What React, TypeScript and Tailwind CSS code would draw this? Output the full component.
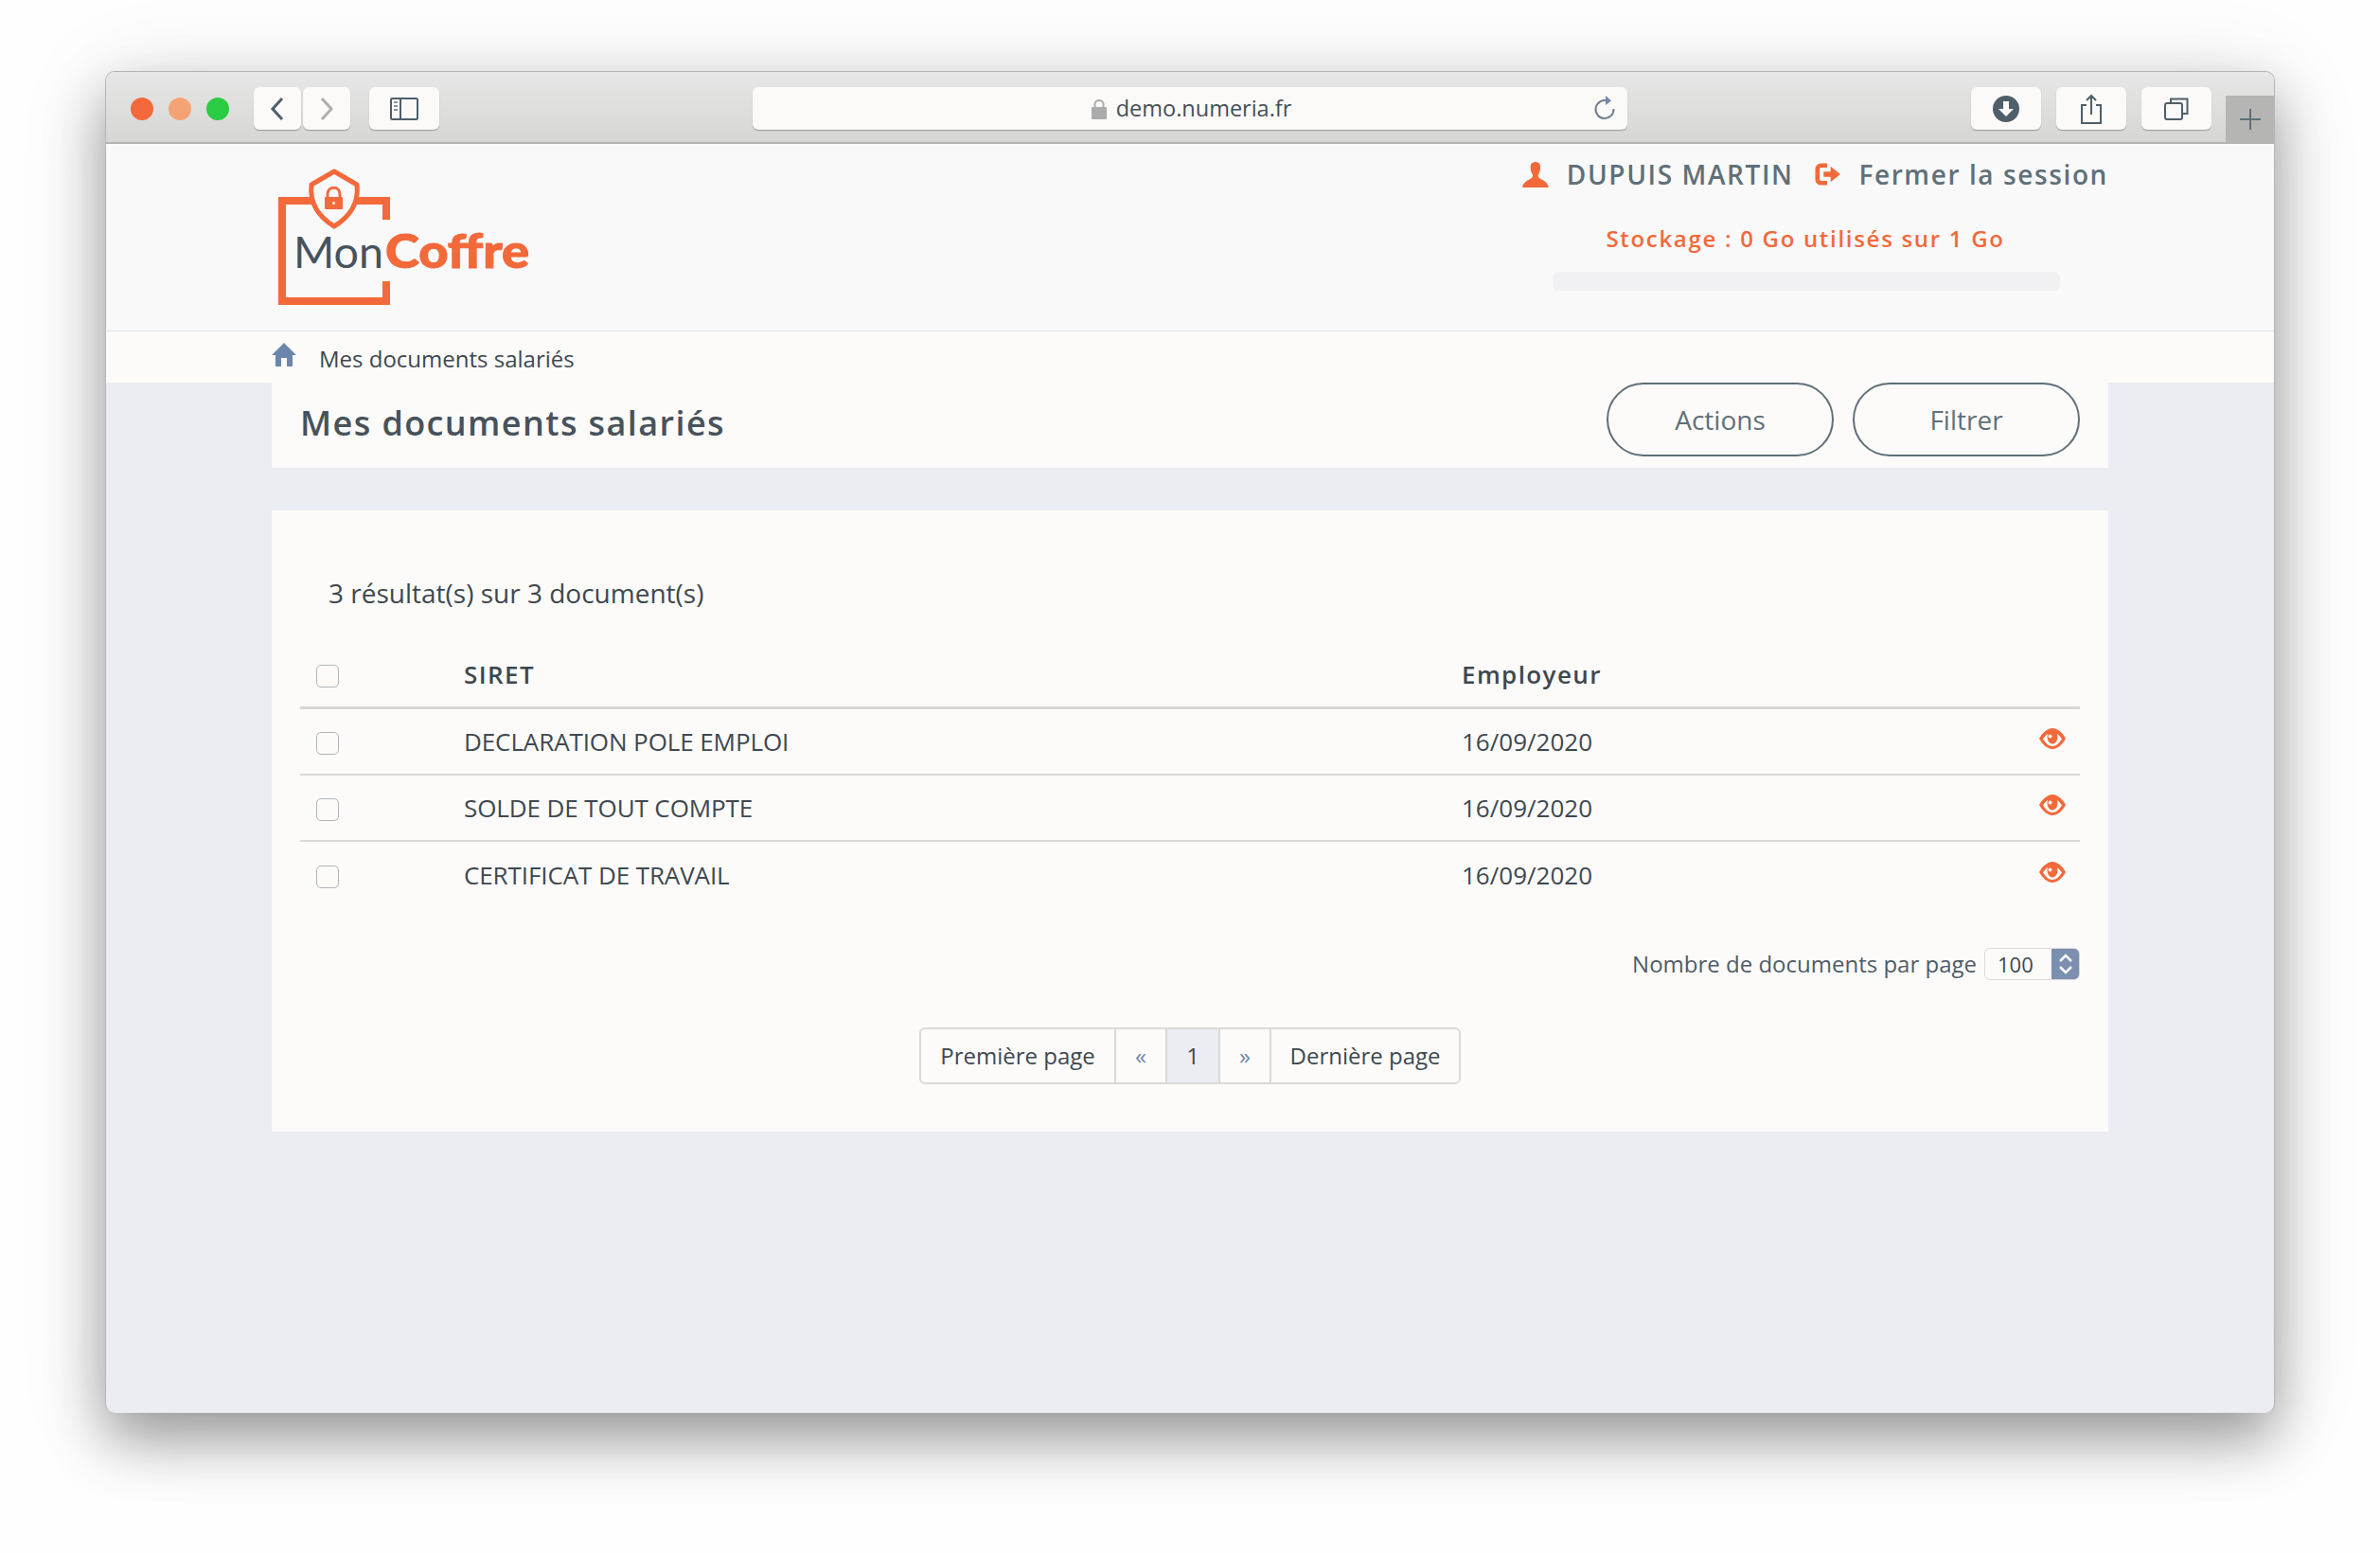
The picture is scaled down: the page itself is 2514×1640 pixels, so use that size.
const rows = ["DECLARATION POLE EMPLOI", "SOLDE DE TOUT COMPTE", "CERTIFICAT DE TRAVAIL"];

function Logo() {
  return (
    <svg width="300" height="160" viewBox="0 0 300 160" className="block">
      {/* frame */}
      <path d="M60 42H18V148H128V127M128 62V42H86" fill="none" stroke="#f3693a" strokeWidth="8" />
      {/* shield */}
      <path d="M73 11L97 25C99 43 91 58 73 69C55 58 47 43 49 25Z" fill="#f9f9fa" stroke="#f3693a" strokeWidth="5" strokeLinejoin="round" />
      <rect x="63" y="38" width="19" height="13" rx="1" fill="#f3693a" />
      <path d="M66 39V35C66 26 79 26 79 35V39" fill="none" stroke="#f3693a" strokeWidth="3" />
      <circle cx="72.500" cy="44.500" r="1.500" fill="#f9f9fa" />
      <text x="30" y="113" fontFamily="Lato, sans-serif" fontWeight="400" fontSize="46" textLength="95" lengthAdjust="spacingAndGlyphs" fill="#46535e">Mon</text>
      <text x="127" y="113" fontFamily="Lato, sans-serif" fontWeight="900" fontSize="49" textLength="152" lengthAdjust="spacingAndGlyphs" fill="#f3693a" stroke="#f3693a" strokeWidth="1">Coffre</text>
    </svg>
  );
}

function ToolButton({ width, children }: { width: string; children: React.ReactNode }) {
  return (
    <div className={`flex h-[45px] ${width} items-center justify-center rounded-[6px] bg-[#fbfaf9] shadow-[0_1px_1px_rgba(0,0,0,0.3)]`}>
      {children}
    </div>
  );
}

function EyeIcon() {
  return (
    <svg width="28" height="22" viewBox="0 0 28 22">
      <path d="M0 11C4 4 9 0 14 0C19 0 24 4 28 11C24 18 19 22 14 22C9 22 4 18 0 11Z" fill="#f3693a" />
      <path d="M4 11.5C6 8.5 7.5 7 9 6C7.5 11 10 16.500 14 16.500C18 16.500 20.500 11 19 6C20.500 7 22 8.500 24 11.500C21 16 18 19 14 19C10 19 7 16 4 11.500Z" fill="#fcfbf9" />
      <circle cx="11.500" cy="8.500" r="2" fill="#fcfbf9" />
    </svg>
  );
}

function Checkbox() {
  return <input type="checkbox" className="h-[24px] w-[24px] appearance-none rounded-[5px] border border-[#b0b3b8] bg-[#fcfbf9]" />;
}

export default function App() {
  return (
    <div className="min-h-screen bg-[#fefefe] pl-[111px] pt-[75px] font-['Open_Sans',sans-serif]">
      <div className="flex h-[1417px] w-[2292px] flex-col overflow-hidden rounded-[10px] border-x border-t border-[#b4b4b4] bg-[#ecedf2] shadow-[0_28px_60px_rgba(0,0,0,0.36),0_10px_100px_rgba(0,0,0,0.1)]">
        {/* Browser toolbar */}
        <div className="flex h-[76px] shrink-0 border-b-2 border-[#b4b4b4] bg-gradient-to-b from-[#e7e7e7] to-[#d6d6d4] pl-[26px]">
          <div className="mt-[27px] flex gap-[16px]">
            <span className="h-[24px] w-[24px] rounded-full bg-[#f4693b]" />
            <span className="h-[24px] w-[24px] rounded-full bg-[#f5a375]" />
            <span className="h-[24px] w-[24px] rounded-full bg-[#29cc42]" />
          </div>
          <div className="ml-[26px] mt-[16px] flex gap-[2px]">
            <ToolButton width="w-[50px]">
              <svg width="16" height="26" viewBox="0 0 16 26"><path d="M13 2L3 13L13 24" fill="none" stroke="#4f5f69" strokeWidth="3" /></svg>
            </ToolButton>
            <ToolButton width="w-[50px]">
              <svg width="16" height="26" viewBox="0 0 16 26"><path d="M3 2L13 13L3 24" fill="none" stroke="#aeaeae" strokeWidth="3" /></svg>
            </ToolButton>
          </div>
          <div className="ml-[20px] mt-[16px]">
            <ToolButton width="w-[74px]">
              <svg width="30" height="24" viewBox="0 0 30 24">
                <rect x="1" y="1" width="28" height="22" rx="1.500" fill="none" stroke="#4f5f69" strokeWidth="2" />
                <path d="M11 1V23" stroke="#4f5f69" strokeWidth="2" />
                <path d="M4 5H8M4 9H8M4 13H8" stroke="#87939b" strokeWidth="2" />
              </svg>
            </ToolButton>
          </div>
          <div className="relative ml-[331px] mt-[16px] flex h-[45px] w-[925px] items-center justify-center gap-[10px] rounded-[6px] bg-[#fbfaf9] pl-[3px] shadow-[0_1px_1px_rgba(0,0,0,0.3)]">
            <svg width="16" height="22" viewBox="0 0 16 22">
              <rect x="0" y="9" width="16" height="13" rx="1" fill="#ababab" />
              <path d="M3.500 10V6C3.500 0.500 12.500 0.500 12.500 6V10" fill="none" stroke="#ababab" strokeWidth="2" />
            </svg>
            <span className="mt-[1px] text-[23.5px] leading-none text-[#454f57]">demo.numeria.fr</span>
            <svg className="absolute right-[12px] top-[8px]" width="24" height="28" viewBox="0 0 24 28">
              <path d="M15 6.500A9.500 9.500 0 1 0 21.500 15" fill="none" stroke="#6f7f90" strokeWidth="2" />
              <path d="M13 1L19 6.500L13 11Z" fill="#6f86a8" />
            </svg>
          </div>
          <div className="ml-[363px] mt-[16px] flex gap-[16px]">
            <ToolButton width="w-[74px]">
              <svg width="28" height="28" viewBox="0 0 28 28">
                <circle cx="14" cy="14" r="14" fill="#4f5f69" />
                <path d="M11 6H17V14H22L14 22L6 14H11Z" fill="#fbfaf9" />
              </svg>
            </ToolButton>
            <ToolButton width="w-[74px]">
              <svg width="24" height="32" viewBox="0 0 24 32">
                <path d="M7 12H2V31H22V12H17M12 22V2M7 7L12 2L17 7" fill="none" stroke="#4f5f69" strokeWidth="2" />
              </svg>
            </ToolButton>
            <ToolButton width="w-[74px]">
              <svg width="26" height="24" viewBox="0 0 26 24">
                <rect x="1" y="6" width="18" height="17" rx="2" fill="none" stroke="#4f5f69" strokeWidth="2" />
                <path d="M7 5V1.500H24.500V17H20" fill="none" stroke="#4f5f69" strokeWidth="2" />
              </svg>
            </ToolButton>
          </div>
          <div className="ml-[15px] flex h-[49px] w-[51px] items-center justify-center self-end bg-[#b5b5b4]">
            <svg width="24" height="24" viewBox="0 0 24 24"><path d="M12 1V23M1 12H23" stroke="#5f7078" strokeWidth="2" /></svg>
          </div>
        </div>

        {/* Site header */}
        <div className="flex h-[198px] shrink-0 justify-center border-b border-[#e3e4e8] bg-[#f9f9fa]">
          <div className="flex w-[1940px] justify-between">
            <div className="-ml-[7px] mt-[18px]"><Logo /></div>
            <div className="flex w-[620px] flex-col">
              <div className="mt-[12px] flex h-[40px] items-center text-[28px] font-semibold tracking-[1.600px] text-[#5f7078]">
                <svg className="ml-[1px]" width="30" height="29" viewBox="0 0 30 29">
                  <path d="M15 0C10 0 9 4 9.500 8C9.800 11 11 13.500 12 15C12 17 11 18.500 8 20C4 22 1 24 0 29H30C29 24 26 22 22 20C19 18.500 18 17 18 15C19 13.500 20.200 11 20.500 8C21 4 20 0 15 0Z" fill="#f3693a" />
                </svg>
                <span className="ml-[19px] whitespace-nowrap">DUPUIS MARTIN</span>
                <svg className="ml-[22px]" width="30" height="26" viewBox="0 0 30 26">
                  <path d="M14 3H7C5 3 3 5 3 7V19C3 21 5 23 7 23H14" fill="none" stroke="#f3693a" strokeWidth="5" />
                  <path d="M10 10H18V4L29 13L18 22V16H10Z" fill="#f3693a" />
                </svg>
                <span className="ml-[19px] whitespace-nowrap">Fermer la session</span>
              </div>
              <div className="mt-[26px] w-[600px] text-center text-[24px] font-semibold leading-[44px] tracking-[1.700px] text-[#f3693a]">
                Stockage : 0 Go utilisés sur 1 Go
              </div>
              <div className="ml-[33px] mt-[13px] h-[20px] w-[536px] rounded-[6px] bg-[#f1f1f4]" />
            </div>
          </div>
        </div>

        {/* Page */}
        <div className="flex flex-col items-center">
          <div className="w-full bg-[#fcfbf9]">
            <div className="mx-auto flex h-[54px] w-[1940px] items-center text-[24px] text-[#3e4850]">
              <svg width="26" height="25" viewBox="0 0 26 25" className="-mt-[6px]">
                <path d="M13 0L26 13H22V25H16V16H10V25H4V13H0Z" fill="#6c86ab" />
              </svg>
              <span className="ml-[24px] mt-[3px]">Mes documents salariés</span>
            </div>
          </div>
          <div className="flex h-[90px] w-[1940px] items-start justify-between bg-[#fcfbf9] pl-[30px] pr-[30px]">
            <h1 className="mt-[16px] text-[36px] font-semibold tracking-[1.400px] text-[#47525c]">Mes documents salariés</h1>
            <div className="flex gap-[20px]">
              <button className="h-[78px] w-[240px] rounded-full border-2 border-[#5f7078] text-[28px] text-[#5f7078]">Actions</button>
              <button className="h-[78px] w-[240px] rounded-full border-2 border-[#5f7078] text-[28px] text-[#5f7078]">Filtrer</button>
            </div>
          </div>

          {/* Results */}
          <div className="mt-[45px] h-[656px] w-[1940px] bg-[#fcfbf9] px-[30px]">
            <p className="ml-[30px] mt-[67px] text-[28px] leading-[40px] text-[#3e4850]">3 résultat(s) sur 3 document(s)</p>
            <div className="mt-[32px] flex h-[71px] items-center border-b-[3px] border-[#d6d6d4] text-[#3e4850]">
              <div className="w-[173px] pl-[17px] pt-[10px]"><Checkbox /></div>
              <div className="w-[1054px] text-[26px] font-semibold tracking-[1.400px]">SIRET</div>
              <div className="text-[26px] font-semibold tracking-[1.400px]">Employeur</div>
            </div>
            {rows.map((name, i) => (
              <div key={name} className={`flex h-[70px] items-center text-[26px] text-[#3e4850] ${i < rows.length - 1 ? "border-b-2 border-[#d9d9d7]" : ""}`}>
                <div className="w-[173px] pl-[17px] pt-[8px]"><Checkbox /></div>
                <div className="w-[1054px] tracking-[-0.100px]">{name}</div>
                <div>16/09/2020</div>
                <div className="ml-auto -mt-[6px] pr-[15px]"><EyeIcon /></div>
              </div>
            ))}
            <div className="mt-[41px] flex items-center justify-end">
              <span className="text-[24px] text-[#4f5b66]">Nombre de documents par page</span>
              <div className="ml-[8px] flex h-[34px] w-[101px] overflow-hidden rounded-[6px] border border-[#d9d9d7]">
                <span className="flex-1 pl-[13px] text-[22px] leading-[32px] text-[#3e4850]">100</span>
                <span className="flex w-[29px] items-center justify-center bg-[#7b8fb0]">
                  <svg width="16" height="26" viewBox="0 0 16 26">
                    <path d="M2 10L8 4L14 10M2 16L8 22L14 16" fill="none" stroke="#fcfbf9" strokeWidth="2.500" />
                  </svg>
                </span>
              </div>
            </div>
            <div className="mt-[49px] flex justify-center">
              <div className="flex h-[60px] overflow-hidden rounded-[6px] border-2 border-[#d9d9d7] text-[24px] text-[#3e4850]">
                <span className="flex w-[204px] items-center justify-center">Première page</span>
                <span className="flex w-[54px] items-center justify-center border-l-2 border-[#d9d9d7] text-[#6c86ab]">«</span>
                <span className="flex w-[58px] items-center justify-center border-x-2 border-[#d9d9d7] bg-[#ecedf2]">1</span>
                <span className="flex w-[52px] items-center justify-center text-[#6c86ab]">»</span>
                <span className="flex w-[200px] items-center justify-center border-l-2 border-[#d9d9d7]">Dernière page</span>
              </div>
            </div>
          </div>
        </div>
      </div>
    </div>
  );
}
